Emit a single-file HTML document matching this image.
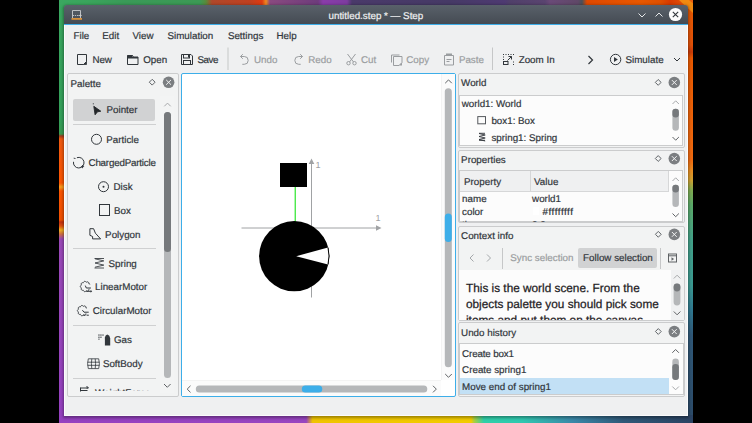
<!DOCTYPE html>
<html><head><meta charset="utf-8">
<style>
*{margin:0;padding:0;box-sizing:border-box}
html,body{width:752px;height:423px;overflow:hidden;background:#000}
body{position:relative;font-family:"Liberation Sans",sans-serif;color:#31363b}
.a{position:absolute}
.t{position:absolute;white-space:nowrap;margin-left:-0.5px;margin-top:1px;font-size:9.8px;line-height:12px;text-rendering:geometricPrecision;-webkit-text-stroke:0.2px currentColor}
.dis{color:#9b9ea1}
svg{position:absolute;overflow:visible}
.panel{position:absolute;border:1px solid #cbcccd;border-radius:2px;background:#f2f3f3}
.box{position:absolute;border:1px solid #cbcccd;background:#fcfcfc;overflow:hidden}
.sep{position:absolute;height:1px;background:#cfd0d1}
.cl{position:absolute;width:11px;height:11px;border-radius:50%;background:#7b7e81}
</style></head><body>
<!-- wallpaper -->
<svg style="left:0;top:0" width="752" height="423">
  <defs>
    <linearGradient id="gl" x1="0" y1="0" x2="0" y2="1"><stop offset="0.0000" stop-color="#3aa860"/><stop offset="0.2837" stop-color="#34a05a"/><stop offset="0.3168" stop-color="#3a9a50"/><stop offset="0.3215" stop-color="#a03a20"/><stop offset="0.3286" stop-color="#f05a10"/><stop offset="0.4326" stop-color="#fc5400"/><stop offset="0.4421" stop-color="#f8a020"/><stop offset="0.4515" stop-color="#fc5400"/><stop offset="0.5201" stop-color="#f05000"/><stop offset="0.5248" stop-color="#c03010"/><stop offset="0.5343" stop-color="#e05010"/><stop offset="0.5437" stop-color="#f0b020"/><stop offset="0.5532" stop-color="#d07040"/><stop offset="0.5650" stop-color="#9a48b8"/><stop offset="1.0000" stop-color="#9540c0"/></linearGradient>
    <linearGradient id="gr" x1="0" y1="0" x2="0" y2="1"><stop offset="0.0000" stop-color="#e85a00"/><stop offset="0.1064" stop-color="#e05008"/><stop offset="0.1229" stop-color="#c83a08"/><stop offset="0.1371" stop-color="#e85800"/><stop offset="0.3783" stop-color="#f06a10"/><stop offset="0.4019" stop-color="#e88a20"/><stop offset="0.4255" stop-color="#d0a030"/><stop offset="0.4492" stop-color="#80aa50"/><stop offset="0.4846" stop-color="#5aa868"/><stop offset="0.5674" stop-color="#42a088"/><stop offset="0.6738" stop-color="#3a9890"/><stop offset="0.7329" stop-color="#2f7890"/><stop offset="0.7920" stop-color="#2f5878"/><stop offset="1.0000" stop-color="#2c4a68"/></linearGradient>
    <linearGradient id="gt" x1="0" y1="0" x2="1" y2="0"><stop offset="0.0000" stop-color="#3aa860"/><stop offset="0.0489" stop-color="#3aa45c"/><stop offset="0.1041" stop-color="#3a9a58"/><stop offset="0.2224" stop-color="#3c9a55"/><stop offset="0.2319" stop-color="#5a8a3a"/><stop offset="0.2413" stop-color="#b0482a"/><stop offset="0.3013" stop-color="#c04020"/><stop offset="0.3202" stop-color="#e03a10"/><stop offset="0.3265" stop-color="#f08a20"/><stop offset="0.3328" stop-color="#8a4a80"/><stop offset="0.4085" stop-color="#6e3c7c"/><stop offset="0.4164" stop-color="#8a3caa"/><stop offset="0.4543" stop-color="#7e3ca0"/><stop offset="0.4621" stop-color="#4a3a6a"/><stop offset="0.6167" stop-color="#463a66"/><stop offset="0.7035" stop-color="#4e3a72"/><stop offset="0.7114" stop-color="#50406a"/><stop offset="0.7666" stop-color="#5a4470"/><stop offset="0.7744" stop-color="#6a4a78"/><stop offset="0.8186" stop-color="#604868"/><stop offset="0.8249" stop-color="#4a5058"/><stop offset="0.8328" stop-color="#e04800"/><stop offset="0.9164" stop-color="#e85800"/><stop offset="0.9479" stop-color="#e05000"/><stop offset="0.9637" stop-color="#d83a00"/><stop offset="1.0000" stop-color="#e86010"/></linearGradient>
    <linearGradient id="gb" x1="0" y1="0" x2="1" y2="0">
      <stop offset="0" stop-color="#9540c0"/><stop offset="0.39" stop-color="#9845c0"/><stop offset="0.40" stop-color="#f0c400"/>
      <stop offset="0.65" stop-color="#f2cc00"/><stop offset="0.655" stop-color="#a8d040"/><stop offset="0.67" stop-color="#30d0a8"/>
      <stop offset="0.73" stop-color="#30c8b0"/><stop offset="0.81" stop-color="#3a88a8"/><stop offset="0.89" stop-color="#2f5878"/>
      <stop offset="1" stop-color="#2a4262"/>
    </linearGradient>
  </defs>
  <rect x="59" y="0" width="634" height="423" fill="#9540c0"/>
  <rect x="59" y="0" width="6" height="423" fill="url(#gl)"/>
  <rect x="687" y="0" width="6" height="423" fill="url(#gr)"/>
  <rect x="59" y="0" width="634" height="7" fill="url(#gt)"/>
  <rect x="59" y="415" width="634" height="8" fill="url(#gb)"/>
  <polygon points="679,0 689,0 693,3.5 693,13" fill="#f08a10"/>
</svg>
<!-- window shadow -->
<div class="a" style="left:59px;top:0;width:634px;height:423px;overflow:hidden"><div class="a" style="left:5px;top:5px;width:624px;height:411px;border-radius:3px 3px 0 0;box-shadow:0 1px 3px 1px rgba(0,0,0,0.35)"></div></div>
<!-- window -->
<div class="a" style="left:64px;top:5px;width:624px;height:411px;border-radius:3px 3px 0 0;overflow:hidden;background:linear-gradient(#59616a 0,#454b53 19px,#3daee9 19px,#3daee9 20px,#eff0f1 20px)">
  <div class="a" style="left:0;top:20px;width:624px;height:391px;border:1px solid #fbfbfc;border-top:0"></div>
</div>
<!-- title bar -->
<svg style="left:0;top:0" width="752" height="30">
  <g fill="none" stroke="#c9ccce" stroke-width="0.9">
    <path d="M72.5 18V10.5H80.5V18"/>
    <path d="M73 15.5h1.2M75 15.5h1.2M77 15.5h1.2M78.5 15.5h2.5M80.2 14.3l1.2 1.2l-1.2 1.2"/>
  </g>
  <rect x="71.5" y="18" width="10.5" height="1.8" fill="#d8923c"/>
  <path d="M638.5 13.5l3.5 3.5l3.5-3.5" fill="none" stroke="#e6e8ea" stroke-width="1"/>
  <path d="M655.5 16.5l3.5-3.5l3.5 3.5" fill="none" stroke="#e6e8ea" stroke-width="1"/>
  <circle cx="675.5" cy="14.5" r="6.6" fill="#fcfcfc"/>
  <path d="M672.8 11.8l5.4 5.4M678.2 11.8l-5.4 5.4" stroke="#31363b" stroke-width="1.1"/>
</svg>
<div class="t" style="left:329px;top:9.7px;color:#eff0f1">untitled.step * — Step</div>

<!-- menu -->
<div class="t" style="left:74px;top:30px">File</div>
<div class="t" style="left:102.8px;top:30px">Edit</div>
<div class="t" style="left:133px;top:30px">View</div>
<div class="t" style="left:168px;top:30px">Simulation</div>
<div class="t" style="left:228.4px;top:30px">Settings</div>
<div class="t" style="left:277px;top:30px">Help</div>

<!-- toolbar icons -->
<svg style="left:0;top:0" width="752" height="80">
  <!-- new -->
  <path d="M77.5 54.5h9v7l-3 3h-6z" fill="none" stroke="#31363b"/>
  <path d="M86.5 61.5v3h-3z" fill="#31363b" stroke="#31363b" stroke-width="0.8"/>
  <!-- open -->
  <path d="M127.5 55.5h5l1 1.5h4.5v7.5h-10.5z" fill="none" stroke="#31363b"/>
  <rect x="127.5" y="55" width="5" height="3" fill="#31363b"/>
  <rect x="127.5" y="57" width="10.5" height="1.5" fill="#31363b"/>
  <!-- save -->
  <path d="M181.5 54.5h9.5l1.5 1.5v8.5h-11z" fill="none" stroke="#31363b"/>
  <rect x="183.5" y="54.5" width="6" height="3.5" fill="none" stroke="#31363b"/>
  <rect x="183.5" y="60.5" width="7" height="4" fill="none" stroke="#31363b"/>
  <rect x="188" y="55" width="1.5" height="2.5" fill="#31363b"/>
  <!-- separator -->
  <rect x="227.5" y="47.5" width="1" height="22.5" fill="#c6c7c8"/>
  <!-- undo -->
  <path d="M240.5 56.5h3.8a3.9 3.9 0 0 1 0 7.8h-2" fill="none" stroke="#9a9da0"/>
  <path d="M242.8 54.2l-2.3 2.3l2.3 2.3" fill="none" stroke="#9a9da0"/>
  <!-- redo -->
  <path d="M302.5 56.5h-3.8a3.9 3.9 0 0 0 0 7.8h2" fill="none" stroke="#9a9da0"/>
  <path d="M300.2 54.2l2.3 2.3l-2.3 2.3" fill="none" stroke="#9a9da0"/>
  <!-- cut -->
  <g fill="none" stroke="#9a9da0">
    <path d="M347.5 54l6 8M355.5 54l-6 8"/>
    <circle cx="348.5" cy="63.2" r="1.7"/>
    <circle cx="354.5" cy="63.2" r="1.7"/>
  </g>
  <!-- copy -->
  <g fill="none" stroke="#9a9da0">
    <path d="M391.5 62.5v-7.5h8"/>
    <path d="M393.5 56.5h8.5v6l-3 3h-5.5z"/>
  </g>
  <path d="M402 62.5v3h-3z" fill="#9a9da0"/>
  <!-- paste -->
  <g fill="none" stroke="#9a9da0">
    <path d="M444.5 55.5h9v9.5h-9z"/>
    <path d="M446.5 59.5h5M446.5 61.5h3"/>
  </g>
  <rect x="446" y="53.5" width="6" height="2.5" fill="#9a9da0"/>
  <!-- separator -->
  <rect x="492" y="47.5" width="1" height="22.5" fill="#c6c7c8"/>
  <!-- zoom in -->
  <g fill="#31363b">
    <rect x="503" y="54" width="1" height="1"/><rect x="505.5" y="54" width="1" height="1"/><rect x="508" y="54" width="1" height="1"/><rect x="510.5" y="54" width="1" height="1"/><rect x="513" y="54" width="1" height="1"/>
    <rect x="503" y="56.5" width="1" height="1"/><rect x="503" y="59" width="1" height="1"/>
    <rect x="513" y="61.5" width="1" height="1"/><rect x="513" y="64" width="1" height="1"/>
  </g>
  <rect x="503.5" y="61.5" width="4.5" height="3" fill="none" stroke="#31363b"/>
  <path d="M507.5 60.5l4-4M508.5 56.5h3v3" fill="none" stroke="#31363b"/>
  <!-- more -->
  <path d="M588.5 56l4 4l-4 4" fill="none" stroke="#31363b" stroke-width="1.2"/>
  <!-- simulate -->
  <circle cx="615.6" cy="59.5" r="5.2" fill="none" stroke="#31363b"/>
  <path d="M614 57v5l3.8-2.5z" fill="#31363b"/>
  <path d="M674 58l3 3l3-3" fill="none" stroke="#31363b"/>
</svg>
<!-- toolbar text -->
<div class="t" style="left:93px;top:53.6px;letter-spacing:-0.1px">New</div>
<div class="t" style="left:143.7px;top:53.6px">Open</div>
<div class="t" style="left:198px;top:53.6px;letter-spacing:-0.45px">Save</div>
<div class="t dis" style="left:254.5px;top:53.6px">Undo</div>
<div class="t dis" style="left:308.7px;top:53.6px">Redo</div>
<div class="t dis" style="left:361.4px;top:53.6px">Cut</div>
<div class="t dis" style="left:406.7px;top:53.6px">Copy</div>
<div class="t dis" style="left:459.4px;top:53.6px">Paste</div>
<div class="t" style="left:519.2px;top:53.6px">Zoom In</div>
<div class="t" style="left:626px;top:53.6px">Simulate</div>
<!-- palette panel -->
<div class="panel" style="left:67px;top:73px;width:112px;height:324px"></div>
<div class="t" style="left:71px;top:77.6px">Palette</div>
<div class="a" style="left:160px;top:96px;width:14px;height:297px;background:#f3f4f4"></div>
<div class="a" style="left:73px;top:98.5px;width:82px;height:22px;background:#d1d2d3;border-radius:2px"></div>
<div class="sep" style="left:72.5px;top:124px;width:83px"></div>
<div class="sep" style="left:72.5px;top:248px;width:83px"></div>
<div class="sep" style="left:72.5px;top:325px;width:83px"></div>
<div class="sep" style="left:72.5px;top:378px;width:83px"></div>
<div class="a" style="left:163.6px;top:111.5px;width:7px;height:266px;border-radius:3.5px;background:#b5b7b9"></div>
<div class="a" style="left:163.6px;top:111.5px;width:7px;height:140px;border-radius:3.5px;background:#76797c"></div>
<svg style="left:0;top:0" width="752" height="423">
  <!-- header icons palette -->
  <path d="M152.2 79.3l2.9 2.9l-2.9 2.9l-2.9-2.9z" fill="none" stroke="#5f6367" stroke-width="1"/>
  <circle cx="168.6" cy="82.3" r="5.8" fill="#7b7e81"/>
  <path d="M166.2 79.9l4.8 4.8M171 79.9l-4.8 4.8" stroke="#f4f5f5" stroke-width="1"/>
  <!-- scroll arrows -->
  <path d="M164.3 106.3l3.2-3.2l3.2 3.2" fill="none" stroke="#a7a9ab" stroke-width="1"/>
  <path d="M164 384l3.3 3.3l3.3-3.3" fill="none" stroke="#5f6265" stroke-width="1"/>
  <!-- pointer -->
  <path d="M93.8 106.3l7 4.9l-3.3 0.6l-2.4 3z" fill="#232629" stroke="#232629" stroke-width="0.9" stroke-linejoin="round"/>
  <rect x="92.8" y="103.3" width="1" height="1" fill="#31363b"/>
  <!-- particle -->
  <circle cx="96.5" cy="139.3" r="5" fill="none" stroke="#31363b" stroke-width="1"/>
  <!-- charged -->
  <path d="M76.9 157.7A5.3 5.3 0 1 1 73.5 161.8" fill="none" stroke="#31363b" stroke-width="1"/>
  <path d="M75.5 158.5l-1.8-0.3M82.5 165v3.2M80.9 166.6h3.2" fill="none" stroke="#31363b" stroke-width="0.9"/>
  <!-- disk -->
  <circle cx="103.5" cy="186.7" r="5" fill="none" stroke="#31363b" stroke-width="1"/>
  <circle cx="103.5" cy="186.7" r="1" fill="#31363b"/>
  <!-- box -->
  <rect x="99.5" y="204.5" width="10" height="11" fill="none" stroke="#31363b" stroke-width="1"/>
  <!-- polygon -->
  <path d="M89.9 228.7h3.7l1.8 4.5l5.2 5.7h-8v-2.4l-2.7-1.2z" fill="none" stroke="#31363b" stroke-width="1"/>
  <!-- spring -->
  <path d="M94.5 258.5h9.5M95 258.8l8.8 2.1l-8.8 2.1l8.8 2.1l-8.8 2.1M94.5 268h9.5" fill="none" stroke="#31363b" stroke-width="0.85"/>
  <!-- linear motor -->
  <g fill="none" stroke="#31363b" stroke-width="1">
    <path d="M89.30 289.16 L89.10 289.21 L88.90 289.25 L88.80 289.37 L88.80 289.58 L88.78 289.78 L88.75 289.99 L88.70 290.19 L88.64 290.37 L88.55 290.55 L88.44 290.70 L88.32 290.84 L88.18 290.95 L88.02 291.05 L87.85 291.11 L87.67 291.15 L87.48 291.16 L87.29 291.15 L87.09 291.12 L86.89 291.06 L86.70 290.99 L86.51 290.89 L86.33 290.79 L86.18 290.82 L86.05 290.98 L85.90 291.13 L85.75 291.26 L85.59 291.38 L85.41 291.48 L85.23 291.56 L85.05 291.61 L84.87 291.64 L84.69 291.63 L84.51 291.60 L84.34 291.54 L84.17 291.46 L84.02 291.35 L83.88 291.21 L83.75 291.06 L83.64 290.89 L83.54 290.71 L83.45 290.52 L83.38 290.32 L83.25 290.25 L83.04 290.28 L82.84 290.30 L82.63 290.31 L82.43 290.30 L82.23 290.26 L82.04 290.21 L81.87 290.13 L81.72 290.03 L81.58 289.91 L81.46 289.77 L81.37 289.61 L81.30 289.44 L81.25 289.26 L81.23 289.07 L81.23 288.87 L81.25 288.67 L81.29 288.46 L81.35 288.26 L81.42 288.07 L81.37 287.92 L81.19 287.82 L81.01 287.70 L80.85 287.57 L80.71 287.43 L80.58 287.28 L80.47 287.12 L80.39 286.95 L80.33 286.77 L80.30 286.59 L80.30 286.41 L80.33 286.23 L80.39 286.05 L80.47 285.88 L80.58 285.72 L80.71 285.57 L80.85 285.43 L81.01 285.30 L81.19 285.18 L81.37 285.08 L81.42 284.93 L81.35 284.74 L81.29 284.54 L81.25 284.33 L81.23 284.13 L81.23 283.93 L81.25 283.74 L81.30 283.56 L81.37 283.39 L81.46 283.23 L81.58 283.09 L81.72 282.97 L81.87 282.87 L82.04 282.79 L82.23 282.74 L82.43 282.70 L82.63 282.69 L82.84 282.70 L83.04 282.72 L83.25 282.75 L83.38 282.68 L83.45 282.48 L83.54 282.29 L83.64 282.11 L83.75 281.94 L83.88 281.79 L84.02 281.65 L84.17 281.54 L84.34 281.46 L84.51 281.40 L84.69 281.37 L84.87 281.36 L85.05 281.39 L85.23 281.44 L85.41 281.52 L85.59 281.62 L85.75 281.74 L85.90 281.87 L86.05 282.02 L86.18 282.18 L86.33 282.21 L86.51 282.11 L86.70 282.01 L86.89 281.94 L87.09 281.88 L87.29 281.85 L87.48 281.84 L87.67 281.85 L87.85 281.89 L88.02 281.95 L88.18 282.05 L88.32 282.16 L88.44 282.30 L88.55 282.45 L88.64 282.63 L88.70 282.81 L88.75 283.01 L88.78 283.22 L88.80 283.42 L88.80 283.63 L88.90 283.75 L89.10 283.79 L89.30 283.84 L89.50 283.90 L89.69 283.98 L89.86 284.08 L90.02 284.20 L90.15 284.33"/>
    <path d="M85.3 285.6l1 2.4h4.6M86.2 291.3h5"/>
  </g>
  <path d="M90.6 289.9l1.6 1.4l-1.6 1.4z" fill="#31363b"/>
  <!-- circular motor -->
  <g fill="none" stroke="#31363b" stroke-width="1">
    <path d="M85.89 313.36 L85.90 313.57 L85.89 313.78 L85.87 313.99 L85.83 314.19 L85.77 314.38 L85.70 314.56 L85.60 314.73 L85.48 314.87 L85.35 315.00 L85.20 315.10 L85.04 315.18 L84.86 315.23 L84.68 315.26 L84.48 315.26 L84.29 315.24 L84.09 315.19 L83.90 315.13 L83.71 315.04 L83.52 314.94 L83.35 314.83 L83.22 315.00 L83.08 315.15 L82.93 315.30 L82.77 315.43 L82.60 315.54 L82.42 315.63 L82.24 315.69 L82.06 315.73 L81.88 315.74 L81.70 315.72 L81.52 315.68 L81.35 315.60 L81.19 315.50 L81.05 315.38 L80.91 315.24 L80.79 315.08 L80.68 314.90 L80.59 314.71 L80.52 314.52 L80.45 314.32 L80.25 314.37 L80.04 314.40 L79.83 314.41 L79.63 314.41 L79.43 314.38 L79.24 314.34 L79.06 314.27 L78.89 314.18 L78.74 314.07 L78.62 313.94 L78.51 313.79 L78.43 313.63 L78.37 313.45 L78.34 313.26 L78.32 313.07 L78.34 312.87 L78.37 312.66 L78.42 312.46 L78.48 312.26 L78.56 312.07 L78.38 311.97 L78.20 311.86 L78.03 311.74 L77.88 311.60 L77.74 311.46 L77.62 311.30 L77.53 311.13 L77.46 310.96 L77.41 310.78 L77.40 310.60 L77.41 310.42 L77.46 310.24 L77.53 310.07 L77.62 309.90 L77.74 309.74 L77.88 309.60 L78.03 309.46 L78.20 309.34 L78.38 309.23 L78.56 309.13 L78.48 308.94 L78.42 308.74 L78.37 308.54 L78.34 308.33 L78.32 308.13 L78.34 307.94 L78.37 307.75 L78.43 307.57 L78.51 307.41 L78.62 307.26 L78.74 307.13 L78.89 307.02 L79.06 306.93 L79.24 306.86 L79.43 306.82 L79.63 306.79 L79.83 306.79 L80.04 306.80 L80.25 306.83 L80.45 306.88 L80.52 306.68 L80.59 306.49 L80.68 306.30 L80.79 306.12 L80.91 305.96 L81.05 305.82 L81.19 305.70 L81.35 305.60 L81.52 305.52 L81.70 305.48 L81.88 305.46 L82.06 305.47 L82.24 305.51 L82.42 305.57 L82.60 305.66 L82.77 305.77 L82.93 305.90 L83.08 306.05 L83.22 306.20 L83.35 306.37 L83.52 306.26 L83.71 306.16 L83.90 306.07 L84.09 306.01 L84.29 305.96 L84.48 305.94 L84.68 305.94 L84.86 305.97 L85.04 306.02 L85.20 306.10 L85.35 306.20 L85.48 306.33 L85.60 306.47 L85.70 306.64 L85.77 306.82 L85.83 307.01 L85.87 307.21 L85.89 307.42 L85.90 307.63 L85.89 307.84 L86.10 307.87 L86.30 307.91 L86.50 307.97 L86.70 308.04 L86.88 308.13"/>
    <path d="M82.4 310.2l1.6 2h4.7M83.2 315.2h2.2M86.6 315.2h2.2"/>
  </g>
  <!-- gas -->
  <g fill="#31363b">
    <rect x="98.4" y="334.4" width="1.1" height="1.3"/><rect x="98.4" y="336.6" width="1.1" height="1.3"/><rect x="98.4" y="338.6" width="1.1" height="1.1"/>
    <rect x="100.4" y="334.4" width="1.1" height="1.3"/><rect x="100.4" y="336.6" width="1.1" height="1.3"/>
    <rect x="102.2" y="334.6" width="1.6" height="0.9"/>
    <path d="M104.9 337.6q0.4-2.5 2.4-3q2.6 0.8 2.9 3.8v7h-5.3z"/>
  </g>
  <!-- softbody -->
  <g fill="none" stroke="#31363b" stroke-width="0.8">
    <path d="M88.3 358.8h10.4q1.4 5 0 9.8h-10.4q-1.4-5 0-9.8z"/>
    <path d="M91.8 358.8q-0.8 4.9 0 9.8M95.2 358.8q0.8 4.9 0 9.8M87.5 362.2h12M87.5 365.3h12"/>
  </g>
  <!-- weightforce -->
  <g fill="none" stroke="#31363b" stroke-width="1">
    <path d="M80.5 388h7.5M80.5 390.5h7M80.5 387.5v4"/>
    <path d="M86.5 386l2 2l-2 0"/>
  </g>
</svg>
<div class="t" style="left:107px;top:104.2px">Pointer</div>
<div class="t" style="left:106.8px;top:133.7px">Particle</div>
<div class="t" style="left:89px;top:157.1px;letter-spacing:-0.2px">ChargedParticle</div>
<div class="t" style="left:114px;top:180.5px">Disk</div>
<div class="t" style="left:114.5px;top:204.7px">Box</div>
<div class="t" style="left:105.6px;top:228.7px">Polygon</div>
<div class="t" style="left:109px;top:257.7px">Spring</div>
<div class="t" style="left:95.5px;top:281.3px">LinearMotor</div>
<div class="t" style="left:93.2px;top:304.5px">CircularMotor</div>
<div class="t" style="left:114.5px;top:333.8px">Gas</div>
<div class="t" style="left:103.4px;top:357.9px;letter-spacing:0px">SoftBody</div>
<div class="a" style="left:90px;top:384px;width:60px;height:7.4px;overflow:hidden"><div class="t" style="left:5.5px;top:3.1px">WeightForce</div></div>

<!-- canvas -->
<div class="a" style="left:181px;top:73px;width:275px;height:324px;border:1px solid #3daee9;background:#fff;border-radius:2px"></div>
<div class="a" style="left:182px;top:380px;width:259px;height:16px;background:#fbfbfb;border-top:1px solid #f3f3f3"></div>
<div class="a" style="left:441px;top:74px;width:14px;height:306px;background:#fbfbfb;border-left:1px solid #f3f3f3"></div>
<svg style="left:0;top:0" width="752" height="423">
  <!-- axes -->
  <g stroke="#a0a2a4" stroke-width="1" fill="none">
    <path d="M241.5 228h137"/>
    <path d="M311.5 297.5v-136"/>
  </g>
  <path d="M381.5 228l-5.5-2.8v5.6z" fill="#a0a2a4"/>
  <path d="M311.5 158.5l-2.8 5.5h5.6z" fill="#a0a2a4"/>
  <text x="315.5" y="168" font-family="Liberation Sans" font-size="9" fill="#a0a2a4">1</text>
  <text x="375.5" y="221" font-family="Liberation Sans" font-size="9" fill="#a0a2a4">1</text>
  <!-- box -->
  <rect x="280" y="163" width="27" height="24" fill="#000"/>
  <!-- spring -->
  <path d="M295.2 187v35" stroke="#00e000" stroke-width="1"/>
  <!-- disk -->
  <circle cx="294.2" cy="256.2" r="35.1" fill="#000"/>
  <path d="M296.2 256.2L328 247.6A35.1 35.1 0 0 1 328 264.4z" fill="#fff"/>
  <path d="M328 247.6A35.1 35.1 0 0 1 328 264.4" fill="none" stroke="#000" stroke-width="1"/>
  <!-- scrollbars -->
  <path d="M445.2 83.2l3.3-3.3l3.3 3.3" fill="none" stroke="#5f6265" stroke-width="1"/>
  <rect x="444.8" y="88.3" width="7" height="279" rx="3.5" fill="#b5b7b9"/>
  <rect x="444.8" y="213.5" width="7" height="28.5" rx="3.5" fill="#3daee9"/>
  <path d="M445.2 374l3.3 3.3l3.3-3.3" fill="none" stroke="#5f6265" stroke-width="1"/>
  <path d="M190.5 385.8l-3.3 3.3l3.3 3.3" fill="none" stroke="#5f6265" stroke-width="1"/>
  <rect x="195.8" y="385.6" width="231.5" height="7" rx="3.5" fill="#b5b7b9"/>
  <rect x="301.8" y="385.6" width="20.5" height="7" rx="3.5" fill="#3daee9"/>
  <path d="M433 385.8l3.3 3.3l-3.3 3.3" fill="none" stroke="#5f6265" stroke-width="1"/>
</svg>
<!-- right panels -->
<div class="panel" style="left:458px;top:73px;width:227px;height:75px"></div>
<div class="t" style="left:461.6px;top:77.4px">World</div>
<div class="box" style="left:459px;top:94.5px;width:224px;height:51px"></div>
<div class="t" style="left:462.2px;top:98.2px">world1: World</div>
<div class="t" style="left:491.9px;top:115.2px">box1: Box</div>
<div class="t" style="left:491.9px;top:131.7px">spring1: Spring</div>

<div class="panel" style="left:458px;top:149.5px;width:227px;height:73px"></div>
<div class="t" style="left:461.6px;top:153.7px">Properties</div>
<div class="box" style="left:459px;top:170px;width:224px;height:52px">
  <div class="a" style="left:0;top:0;width:209px;height:21px;background:#eff0f1;border-bottom:1px solid #d6d7d8;border-right:1px solid #d6d7d8"></div>
  <div class="a" style="left:70px;top:0;width:1px;height:21px;background:#d6d7d8"></div>
</div>
<div class="t" style="left:464.5px;top:176.4px">Property</div>
<div class="t" style="left:534.5px;top:176.4px">Value</div>
<div class="t" style="left:462.6px;top:192.9px">name</div>
<div class="t" style="left:532.6px;top:192.9px">world1</div>
<div class="t" style="left:462.6px;top:205.8px">color</div>
<div class="a" style="left:532.6px;top:207px;width:6px;height:8px;background:#fff"></div>
<div class="t" style="left:543px;top:205.8px;letter-spacing:0.55px">#ffffffff</div>
<div class="a" style="left:460px;top:219px;width:200px;height:2.5px;overflow:hidden"><div class="t" style="left:2.6px;top:-0.2px">time</div><div class="t" style="left:72.6px;top:-0.2px">0.0 s</div></div>

<div class="panel" style="left:458px;top:225.5px;width:227px;height:95px"></div>
<div class="t" style="left:461.6px;top:229.6px">Context info</div>
<div class="a" style="left:578px;top:248px;width:79px;height:19.5px;background:#d1d2d3;border-radius:2px"></div>
<div class="a" style="left:502px;top:247.5px;width:1px;height:21px;background:#c6c7c8"></div>
<div class="a" style="left:660.2px;top:247.5px;width:1px;height:21px;background:#c6c7c8"></div>
<div class="t dis" style="left:510.8px;top:252.4px;letter-spacing:0px">Sync selection</div>
<div class="t" style="left:583.6px;top:252.4px;letter-spacing:0px">Follow selection</div>
<div class="a" style="left:459px;top:269.5px;width:225px;height:50.5px;background:#fcfcfc;overflow:hidden">
  <div class="a" style="left:211.5px;top:0;width:13.5px;height:50.5px;background:#f0f1f2"></div>
  <div style="position:absolute;left:7px;top:11.9px;font-size:11.8px;line-height:15.6px;white-space:nowrap;color:#1d2023;-webkit-text-stroke:0.25px #1d2023;text-rendering:geometricPrecision">This is the world scene. From the<br>objects palette you should pick some<br>items and put them on the canvas</div>
</div>

<div class="panel" style="left:458px;top:322px;width:227px;height:75px"></div>
<div class="t" style="left:461.6px;top:327px">Undo history</div>
<div class="box" style="left:459px;top:343px;width:225px;height:52px">
  <div class="a" style="left:0;top:34px;width:209px;height:17px;background:#c2e0f5"></div>
</div>
<div class="t" style="left:462.6px;top:347.5px;letter-spacing:-0.15px">Create box1</div>
<div class="t" style="left:462.6px;top:364px">Create spring1</div>
<div class="t" style="left:462.6px;top:380.5px;letter-spacing:0px">Move end of spring1</div>

<svg style="left:0;top:0" width="752" height="423">
  <g fill="none" stroke="#5f6367" stroke-width="1">
    <path d="M658.2 79.5l2.9 2.9l-2.9 2.9l-2.9-2.9z"/>
    <path d="M658.2 155.6l2.9 2.9l-2.9 2.9l-2.9-2.9z"/>
    <path d="M658.3 231.4l2.9 2.9l-2.9 2.9l-2.9-2.9z"/>
    <path d="M658.3 328.6l2.9 2.9l-2.9 2.9l-2.9-2.9z"/>
  </g>
  <g fill="#7b7e81">
    <circle cx="674.3" cy="82.5" r="5.8"/>
    <circle cx="674.3" cy="158.6" r="5.8"/>
    <circle cx="674.3" cy="234.4" r="5.8"/>
    <circle cx="674.3" cy="331.6" r="5.8"/>
  </g>
  <g stroke="#f4f5f5" stroke-width="1">
    <path d="M671.9 80.1l4.8 4.8M676.7 80.1l-4.8 4.8"/>
    <path d="M671.9 156.2l4.8 4.8M676.7 156.2l-4.8 4.8"/>
    <path d="M671.9 232l4.8 4.8M676.7 232l-4.8 4.8"/>
    <path d="M671.9 329.2l4.8 4.8M676.7 329.2l-4.8 4.8"/>
  </g>
  <!-- world icons -->
  <rect x="477.8" y="116.6" width="7.7" height="7.2" fill="none" stroke="#55595d" stroke-width="1"/>
  <path d="M479 133.3h6M479 133.5l6.2 1.5l-6.2 1.5l6.2 1.5l-6.2 1.5l6.2 1.5M479 140.3h6" fill="none" stroke="#31363b" stroke-width="0.9"/>
  <!-- scrollbars world -->
  <path d="M672.5 104l3.2-3.2l3.2 3.2" fill="none" stroke="#a7a9ab"/>
  <rect x="672.4" y="108.8" width="6.5" height="22" rx="3.2" fill="#b5b7b9"/>
  <rect x="672.4" y="108.8" width="6.5" height="8.6" rx="3.2" fill="#76797c"/>
  <path d="M672.5 137l3.2 3.2l3.2-3.2" fill="none" stroke="#5f6265"/>
  <!-- props -->
  <path d="M672.5 181l3.2-3.2l3.2 3.2" fill="none" stroke="#a7a9ab"/>
  <rect x="672.4" y="184.7" width="6.5" height="22.3" rx="3.2" fill="#b5b7b9"/>
  <rect x="672.4" y="184.7" width="6.5" height="7.8" rx="3.2" fill="#76797c"/>
  <path d="M672.5 213.5l3.2 3.2l3.2-3.2" fill="none" stroke="#5f6265"/>
  <!-- context toolbar -->
  <path d="M473.5 254.5l-3.5 3.5l3.5 3.5" fill="none" stroke="#a4a7aa"/>
  <path d="M487 254.5l3.5 3.5l-3.5 3.5" fill="none" stroke="#a4a7aa"/>
  <rect x="668.5" y="254" width="8" height="8" fill="none" stroke="#5f6265"/>
  <path d="M668.5 255.8h8" stroke="#5f6265"/>
  <path d="M671.5 257.3v3.4l2.6-1.7z" fill="#5f6265"/>
  <!-- context scroll -->
  <path d="M673.8 278.5l3.3-3.3l3.3 3.3" fill="none" stroke="#a7a9ab"/>
  <rect x="673.6" y="283.4" width="6.8" height="22" rx="3.4" fill="#b5b7b9"/>
  <rect x="673.6" y="283.4" width="6.8" height="8" rx="3.4" fill="#76797c"/>
  <path d="M673.8 311.5l3.3 3.3l3.3-3.3" fill="none" stroke="#5f6265"/>
  <!-- undo scroll -->
  <path d="M672.3 352.8l3.3-3.3l3.3 3.3" fill="none" stroke="#5f6265"/>
  <rect x="672.3" y="358.6" width="6.6" height="21.4" rx="3.3" fill="#b5b7b9"/>
  <rect x="672.3" y="364" width="6.6" height="16" rx="3.3" fill="#76797c"/>
  <path d="M672.3 386.5l3.3 3.3l3.3-3.3" fill="none" stroke="#a7a9ab"/>
</svg>
</body></html>
